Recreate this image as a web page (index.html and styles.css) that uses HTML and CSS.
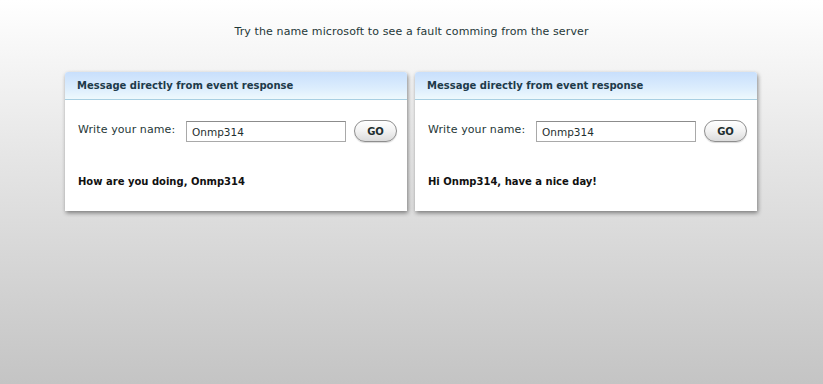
FILE: index.html
```html
<!DOCTYPE html>
<html>
<head>
<meta charset="utf-8">
<link rel="stylesheet" href="styles.css">
</head>
<body>
<div class="page">
  <p class="hint">Try the name microsoft to see a fault comming from the server</p>
  <div class="panels">
    <div class="panel">
      <div class="panel-head">Message directly from event response</div>
      <div class="panel-body">
        <div class="row">
          <span class="label">Write your name:</span>
          <input class="field" type="text" value="Onmp314">
          <button class="go">GO</button>
        </div>
        <p class="result">How are you doing, Onmp314</p>
      </div>
    </div>
    <div class="panel">
      <div class="panel-head">Message directly from event response</div>
      <div class="panel-body">
        <div class="row">
          <span class="label">Write your name:</span>
          <input class="field" type="text" value="Onmp314">
          <button class="go">GO</button>
        </div>
        <p class="result">Hi Onmp314, have a nice day!</p>
      </div>
    </div>
  </div>
</div>
</body>
</html>
```
FILE: styles.css
```css
html, body {
  margin: 0;
  padding: 0;
  height: 100%;
}
body {
  background: linear-gradient(to bottom, #ffffff 0%, #e6e6e6 40%, #c4c4c4 100%);
  font-family: "DejaVu Sans", Verdana, sans-serif;
  font-size: 11px;
  color: #1c2b2b;
}
.page {
  padding-top: 25px;
}
.hint {
  margin: 0;
  text-align: center;
  color: #1f3838;
  line-height: 14px;
  font-size: 11px;
  letter-spacing: 0.12px;
}
.panels {
  display: flex;
  justify-content: center;
  gap: 8px;
  margin-top: 33px;
  padding-right: 1px;
}
.panel {
  width: 342px;
  background: #ffffff;
  box-shadow: 1px 2px 4px rgba(0,0,0,0.45);
  border-radius: 3px 3px 0 0;
}
.panel-head {
  height: 27px;
  line-height: 27px;
  padding-left: 12px;
  font-weight: bold;
  font-size: 10px;
  color: #1d3a4a;
  background: linear-gradient(to bottom, #c8dffc 0%, #dcedfd 60%, #eef9fd 100%);
  border-bottom: 1px solid #a8cfe2;
  border-radius: 3px 3px 0 0;
}
.panel-body {
  padding: 20px 10px 22px 13px;
}
.row {
  display: flex;
  align-items: center;
}
.label {
  width: 108px;
  color: #263838;
  font-size: 11px;
  letter-spacing: 0.1px;
  margin-top: -4px;
}
.field {
  box-sizing: border-box;
  width: 160px;
  height: 21px;
  margin: 0;
  padding: 2px 5px 0;
  border: 1px solid #a9a9a9;
  border-top-color: #8c8c8c;
  font-family: "DejaVu Sans", Verdana, sans-serif;
  font-size: 10.5px;
  color: #1f3030;
  outline: none;
}
.go {
  box-sizing: border-box;
  width: 43px;
  height: 22px;
  margin: 0 0 0 8px;
  padding: 0;
  border: 1px solid #8e8e8e;
  border-radius: 11px;
  background: linear-gradient(to bottom, #ffffff 0%, #f2f2f2 50%, #dcdcdc 100%);
  font-family: "DejaVu Sans", Verdana, sans-serif;
  font-weight: bold;
  font-size: 10px;
  color: #1e2e2e;
  box-shadow: 0 1px 1px rgba(0,0,0,0.15);
}
.result {
  margin: 33px 0 0;
  font-weight: bold;
  font-size: 10px;
  color: #111;
  line-height: 14px;
}
```
